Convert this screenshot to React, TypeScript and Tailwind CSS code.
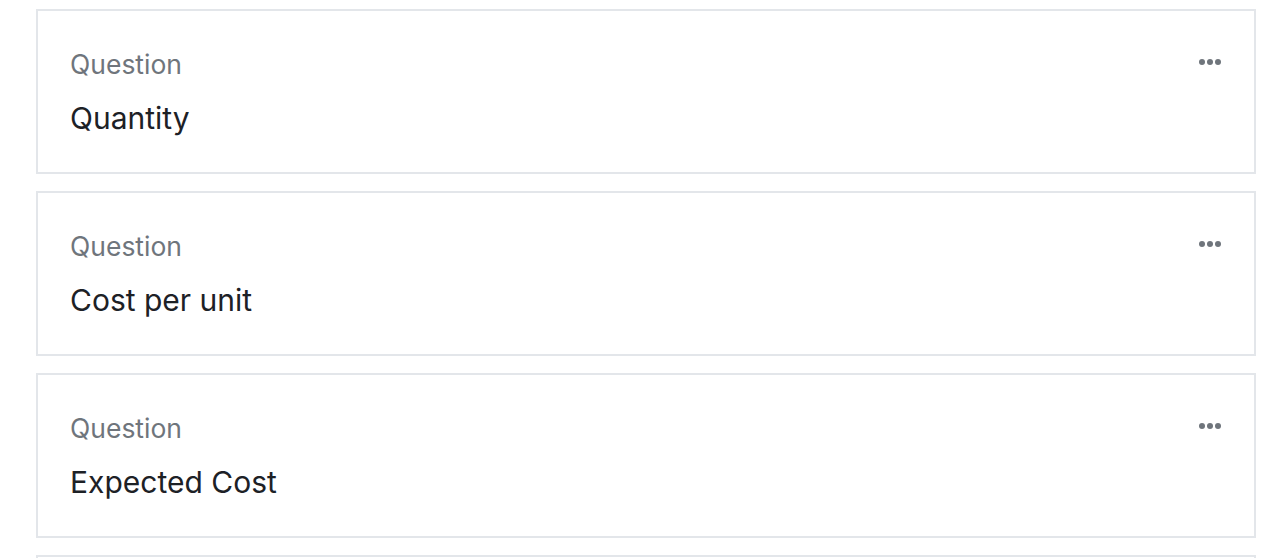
const questions = [
  { id: "1", label: "Question", title: "Quantity" },
  { id: "2", label: "Question", title: "Cost per unit" },
  { id: "3", label: "Question", title: "Expected Cost" },
];

const MoreDots = () => (
  <svg width="24" height="8" viewBox="0 0 24 8" className="text-[#6f757c]">
    <circle cx="4" cy="4" r="3" fill="currentColor" />
    <circle cx="12" cy="4" r="3" fill="currentColor" />
    <circle cx="20" cy="4" r="3" fill="currentColor" />
  </svg>
);

export default function App() {
  return (
    <div className="bg-white h-[558px] px-[36px] pt-[9px] font-['Inter',sans-serif] overflow-hidden">
      <div className="flex flex-col gap-[17px] w-[1220px]">
        {questions.map((q) => (
          <div
            key={q.id}
            className="h-[165px] shrink-0 border-2 border-[#e3e6ea] bg-white flex justify-between px-[32px] pt-[35px]"
          >
            <div className="flex flex-col gap-[16px]">
              <span className="text-[26.5px] leading-[36px] text-[#6f757c]">{q.label}</span>
              <span className="text-[30px] leading-[40px] text-[#1d2126]">{q.title}</span>
            </div>
            <button className="h-[12px] mt-[10px] cursor-pointer">
              <MoreDots />
            </button>
          </div>
        ))}
        {/* next card, scrolled below the fold */}
        <div className="h-[165px] shrink-0 border-2 border-[#e3e6ea] bg-white" />
      </div>
    </div>
  );
}
